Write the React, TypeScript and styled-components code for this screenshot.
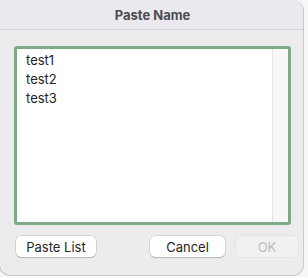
import styled, { createGlobalStyle } from "styled-components"

const Global = createGlobalStyle`
    html, body {
        margin: 0;
        padding: 0;
        background: #f6f5f8;
    }
    * {
        box-sizing: border-box;
    }
`

const Page = styled.div`
    width: 308px;
    height: 277px;
    overflow: hidden;
`

const Window = styled.div`
    width: 305px;
    height: 276px;
    margin-left: -1px;
    display: flex;
    flex-direction: column;
    background: #ececec;
    border: 1px solid #c9c9c9;
    border-top: none;
    border-radius: 0 11px 11px 11px;
    overflow: hidden;
    font-family: Inter, "Liberation Sans", sans-serif;
`

const TitleBar = styled.div`
    height: 30px;
    flex-shrink: 0;
    display: flex;
    align-items: center;
    justify-content: center;
    background: #ebe8ef;
    border-bottom: 1px solid #d6d5d8;
    font-size: 13px;
    font-weight: 700;
    color: #4c4c4f;
    padding-left: 2px;
`

const Body = styled.div`
    flex: 1;
    display: flex;
    flex-direction: column;
    padding: 16px 5px 0 14px;
`

const ListBox = styled.div`
    height: 179px;
    width: 277px;
    display: flex;
    background: #fff;
    border: 3px solid #7dab87;
    border-radius: 3px;
`

const Lines = styled.div`
    flex: 1;
    padding: 2px 9px;
    font-size: 13px;
    line-height: 19px;
    color: #222;
`

const Track = styled.div`
    width: 16px;
    background: #f8f8f8;
    border-left: 1px solid #e6e6e6;
`

const Footer = styled.div`
    display: flex;
    align-items: center;
    margin-top: 11px;
    padding-left: 2px;
    gap: 11px;
`

const Button = styled.button<{ $w: number; $off?: boolean }>`
    width: ${p => p.$w}px;
    height: 21px;
    padding: 0;
    font-family: inherit;
    font-size: 13px;
    border: none;
    border-radius: 5px;
    background: ${p => (p.$off ? "#f1f1f1" : "#fff")};
    color: ${p => (p.$off ? "#bcbcbc" : "#262626")};
    box-shadow: ${p => (p.$off
        ? "0 0 0 0.5px rgba(0,0,0,0.06)"
        : "0 0 0 0.5px rgba(0,0,0,0.18), 0 1px 1px rgba(0,0,0,0.15)")};
`

const Spacer = styled.div`
    flex: 1;
`

export default function App() {
    return (
        <Page>
            <Global />
            <Window>
                <TitleBar>Paste Name</TitleBar>
                <Body>
                    <ListBox>
                        <Lines>
                            <div>test1</div>
                            <div>test2</div>
                            <div>test3</div>
                        </Lines>
                        <Track />
                    </ListBox>
                    <Footer>
                        <Button $w={80}>Paste List</Button>
                        <Spacer />
                        <Button $w={75}>Cancel</Button>
                        <Button $w={62} $off>OK</Button>
                    </Footer>
                </Body>
            </Window>
        </Page>
    )
}
